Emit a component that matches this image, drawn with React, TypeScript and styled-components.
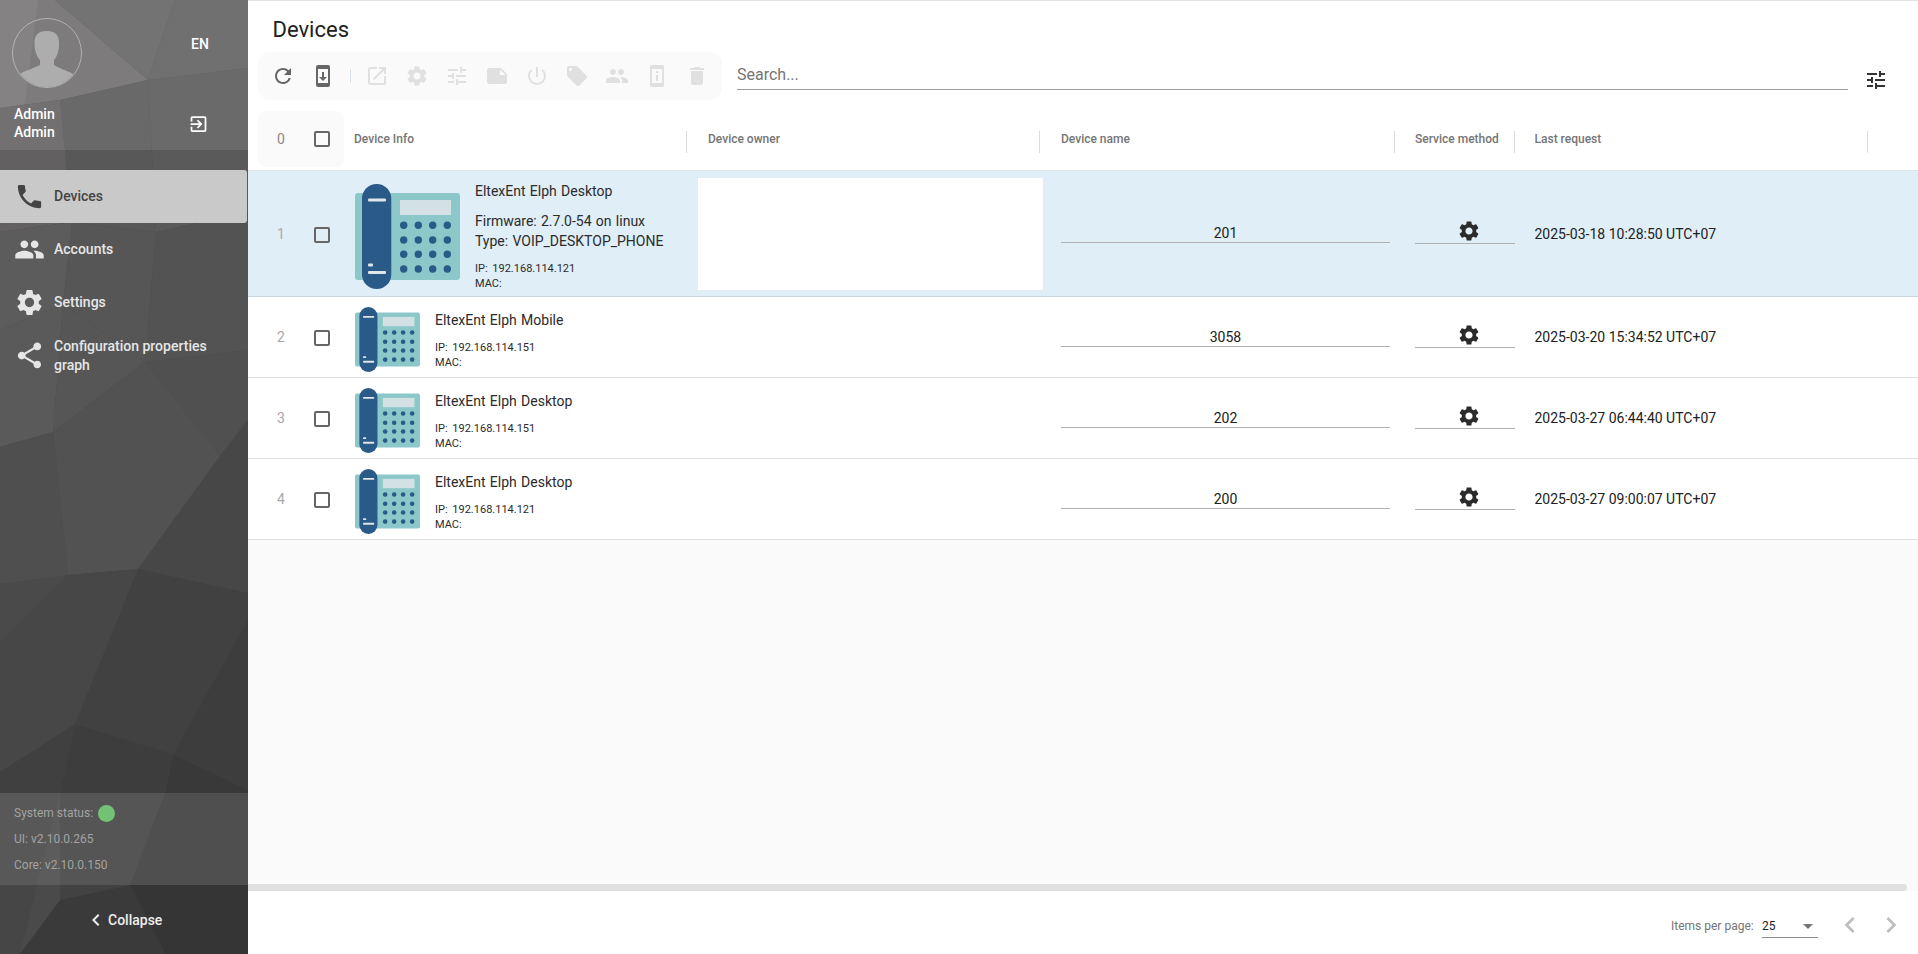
import React from "react";
import styled, { createGlobalStyle } from "styled-components";
import {
  MdChevronLeft,
  MdChevronRight,
  MdDelete,
  MdExitToApp,
  MdLocalOffer,
  MdNote,
  MdOpenInNew,
  MdPeople,
  MdPermDeviceInformation,
  MdPhone,
  MdPowerSettingsNew,
  MdRefresh,
  MdSettings,
  MdShare,
  MdSystemUpdate,
  MdTune,
} from "react-icons/md";

const GlobalStyle = createGlobalStyle`
  html, body {
    margin: 0;
    padding: 0;
    height: 100%;
    background: #fff;
    font-family: Roboto, "Liberation Sans", sans-serif;
    overflow: hidden;
  }
  * {
    box-sizing: border-box;
  }
`;

const Page = styled.div`
  display: flex;
  width: 1918px;
  height: 954px;
`;

const Sidebar = styled.aside`
  position: relative;
  width: 248px;
  flex: none;
  display: flex;
  flex-direction: column;
  background: #4a4a4a;
  overflow: hidden;
`;

const SidebarArt = styled.svg`
  position: absolute;
  top: 0;
  left: 0;
`;

const Profile = styled.div`
  position: relative;
  height: 150px;
  padding: 18px 0 0 12px;
  display: grid;
  grid-template-columns: 179px 18px;
  grid-template-rows: 70px 1fr;
  background: rgba(255, 255, 255, 0.1);
`;

const Avatar = styled.div`
  width: 70px;
  height: 70px;
  border-radius: 50%;
  border: 1px solid rgba(255, 255, 255, 0.4);
  overflow: hidden;
`;

const Lang = styled.div`
  color: #fff;
  font-size: 14px;
  font-weight: 500;
  line-height: 52px;
`;

const UserName = styled.div`
  color: #fff;
  font-size: 14px;
  font-weight: 500;
  line-height: 18px;
  padding: 17px 0 0 2px;
`;

const Logout = styled.div`
  color: #fff;
  display: flex;
  font-size: 24px;
  margin: 24px 0 0 -3px;
`;

const Nav = styled.nav`
  position: relative;
  margin-top: 20px;
  display: flex;
  flex-direction: column;
`;

const NavItem = styled.div<{ $active?: boolean }>`
  height: 53px;
  width: 247px;
  padding-left: 13.5px;
  display: flex;
  align-items: center;
  gap: 9.5px;
  font-size: 14px;
  font-weight: 500;
  line-height: 19px;
  border-radius: 0 3px 3px 0;
  color: ${(p) => (p.$active ? "#444" : "#e6e6e6")};
  background: ${(p) => (p.$active ? "#c9c9c9" : "transparent")};
  svg {
    flex: none;
    font-size: 31px;
  }
`;

const Status = styled.div`
  position: relative;
  margin-top: auto;
  height: 92px;
  padding: 7px 0 0 14px;
  background: rgba(255, 255, 255, 0.1);
  color: #a3a3a3;
  font-size: 12px;
`;

const StatusLine = styled.div`
  height: 26px;
  display: flex;
  align-items: center;
  gap: 5px;
`;

const StatusDot = styled.span`
  width: 17px;
  height: 17px;
  border-radius: 50%;
  background: #73c274;
`;

const Collapse = styled.div`
  position: relative;
  height: 69px;
  padding: 0 0 0 84px;
  display: flex;
  align-items: center;
  color: #eee;
  font-size: 14px;
  font-weight: 500;
  svg {
    font-size: 24px;
  }
`;

const Main = styled.main`
  flex: 1;
  min-width: 0;
  display: flex;
  flex-direction: column;
  border-top: 1px solid #e3e3e3;
`;

const Title = styled.h1`
  margin: 0;
  height: 51px;
  padding-left: 24.5px;
  font-size: 22px;
  font-weight: 400;
  line-height: 58px;
  color: #212121;
`;

const TopBar = styled.div`
  display: flex;
  height: 48px;
  padding-left: 10px;
`;

const Toolbar = styled.div`
  width: 464px;
  flex: none;
  padding-left: 5px;
  display: flex;
  align-items: center;
  background: #fafafa;
  border-radius: 12px;
`;

const ToolButton = styled.span<{ $off?: boolean }>`
  width: 40px;
  height: 40px;
  flex: none;
  display: flex;
  align-items: center;
  justify-content: center;
  font-size: 24px;
  color: ${(p) => (p.$off ? "#e0e0e0" : "#666")};
`;

const ToolSep = styled.span`
  width: 1px;
  height: 14px;
  flex: none;
  margin: 0 6.5px;
  background: #d6e3ec;
`;

const Search = styled.div`
  width: 1111px;
  height: 38px;
  margin-left: 15px;
  border-bottom: 1px solid #9e9e9e;
  font-size: 16px;
  line-height: 46px;
  color: #757575;
`;

const FilterButton = styled.span`
  margin: 16px 0 0 15.5px;
  font-size: 24px;
  display: flex;
  height: 24px;
  color: #333;
`;

const columns = "54px 44px 341px 353px 354.5px 120px 353.5px 1fr";

const HeaderRow = styled.div`
  display: grid;
  grid-template-columns: ${columns};
  height: 63px;
  margin-top: 8px;
  border-bottom: 1px solid #dfe3e6;
  align-items: center;
`;

const CountBox = styled.div`
  grid-column: 1 / 3;
  height: 56px;
  margin: 0 2px 0 10px;
  padding-left: 19px;
  display: flex;
  align-items: center;
  gap: 29.5px;
  background: #fafafa;
  border-radius: 8px;
  color: #8a8a8a;
  font-size: 14px;
`;

const HeaderCell = styled.div`
  height: 22px;
  margin-top: 6px;
  padding-left: 8px;
  font-size: 12px;
  font-weight: 500;
  line-height: 16px;
  color: #757575;
  white-space: nowrap;
  border-right: 1px solid #dcdcdc;
`;

const NameHeader = styled(HeaderCell)`
  padding-left: 21px;
`;

const OwnerHeader = styled(HeaderCell)`
  padding-left: 21px;
`;

const MethodHeader = styled(HeaderCell)`
  padding-left: 20.5px;
`;

const RequestHeader = styled(HeaderCell)`
  padding-left: 20px;
`;

const Check = styled.span`
  display: block;
  width: 16px;
  height: 16px;
  border: 2px solid #666;
  border-radius: 2px;
`;

const Rows = styled.div`
  flex: 1;
  background: #fafafa;
`;

const Row = styled.div<{ $selected?: boolean }>`
  display: grid;
  grid-template-columns: ${columns};
  align-items: center;
  height: ${(p) => (p.$selected ? "126px" : "81px")};
  background: ${(p) => (p.$selected ? "#e0eef7" : "#fff")};
  border-bottom: 1px solid ${(p) => (p.$selected ? "#c8d6e2" : "#e0e0e0")};
`;

const Index = styled.div`
  padding-left: 12px;
  text-align: center;
  font-size: 14px;
  color: #a8a8a8;
`;

const CheckCell = styled.div`
  padding-left: 12px;
  margin-top: 2px;
`;

const Info = styled.div`
  display: flex;
  align-items: center;
  gap: 15px;
  padding: 5px 0 0 9px;
`;

const InfoText = styled.div`
  color: #2b2b2b;
  font-size: 14px;
  line-height: 20px;
  word-spacing: 0.8px;
  white-space: nowrap;
`;

const Block = styled.div`
  margin-top: 10px;
`;

const Small = styled.div`
  font-size: 11px;
  line-height: 15px;
  word-spacing: 2px;
`;

const OwnerCell = styled.div`
  min-width: 0;
`;

const OwnerBox = styled.div`
  width: 345px;
  height: 112px;
  margin-left: 11px;
  background: #fff;
`;

const NameCell = styled.div`
  padding: 0 4.5px 0 21px;
`;

const NameField = styled.div`
  height: 17px;
  margin-top: 1px;
  box-sizing: content-box;
  border-bottom: 1px solid #b0b0b0;
  text-align: center;
  font-size: 14px;
  line-height: 17px;
  color: #212121;
`;

const MethodCell = styled.div`
  padding-left: 20.5px;
`;

const MethodField = styled.div`
  height: 25px;
  margin-bottom: 4px;
  padding-left: 42px;
  border-bottom: 1px solid #b0b0b0;
  font-size: 24px;
  color: #2b2b2b;
  svg {
    display: block;
  }
`;

const RequestCell = styled.div`
  padding-left: 20px;
  font-size: 14px;
  color: #212121;
  white-space: nowrap;
`;

const ScrollBar = styled.div`
  height: 7px;
  background: #fafafa;
  flex: none;
`;

const ScrollThumb = styled.div`
  width: 1659px;
  height: 7px;
  background: #e0e0e0;
  border-radius: 0 4px 4px 0;
`;

const Paginator = styled.footer`
  height: 63px;
  flex: none;
  padding-left: 1423px;
  display: flex;
  align-items: flex-start;
  font-size: 12px;
  color: #757575;
`;

const PerPage = styled.span`
  width: 91px;
  line-height: 70px;
`;

const Select = styled.div`
  position: relative;
  width: 56px;
  height: 47px;
  border-bottom: 1px solid #8f8f8f;
  font-size: 12px;
  line-height: 70px;
  color: #212121;
`;

const Caret = styled.span`
  position: absolute;
  right: 5px;
  top: 33px;
  border-left: 5px solid transparent;
  border-right: 5px solid transparent;
  border-top: 5px solid #757575;
`;

const PageArrow = styled.span<{ $first?: boolean }>`
  margin: 18px 0 0 ${(p) => (p.$first ? "16px" : "9px")};
  font-size: 32px;
  display: flex;
  color: #bdbdbd;
`;

type Poly = [string, string];

const polys: Poly[] = [
  ["0,0 55,0 148,80 60,100 0,108", "#6f6d6d"],
  ["0,0 38,0 25,104 0,108", "#767474"],
  ["55,0 175,0 148,80", "#646464"],
  ["175,0 248,0 248,68 148,80", "#606060"],
  ["148,80 248,68 248,212 156,232", "#5a5a5a"],
  ["60,100 148,80 156,232 72,222", "#585858"],
  ["0,108 60,100 72,222 0,232", "#626060"],
  ["0,232 72,222 63,304 0,330", "#5c5c5c"],
  ["72,222 156,232 145,362 63,304", "#565656"],
  ["156,232 248,212 248,350 145,362", "#535353"],
  ["0,330 63,304 53,432 0,447", "#5a5a5a"],
  ["63,304 145,362 53,432", "#565656"],
  ["145,362 248,350 248,420 220,456", "#505050"],
  ["145,362 220,456 138,569 68,575 53,432", "#525252"],
  ["0,447 53,432 68,575 0,584", "#4f4f4f"],
  ["220,456 248,420 248,593 138,569", "#474747"],
  ["0,584 68,575 0,642", "#4a4a4a"],
  ["0,642 68,575 138,569 75,724 0,772", "#474747"],
  ["138,569 248,593 248,620 173,754 75,724", "#414141"],
  ["248,620 248,790 173,754", "#3d3d3d"],
  ["0,772 75,724 60,793 0,793", "#404040"],
  ["75,724 173,754 165,793 60,793", "#3d3d3d"],
  ["173,754 248,790 248,793 165,793", "#393939"],
  ["0,793 60,793 20,954 0,954", "#464646"],
  ["60,793 165,793 130,885 60,900", "#424242"],
  ["165,793 248,793 248,885 130,885", "#3b3b3b"],
  ["20,954 60,900 130,885 165,954", "#3a3a3a"],
  ["130,885 248,885 248,954 165,954", "#353535"],
];

const Art = () => (
  <SidebarArt width="248" height="954" viewBox="0 0 248 954">
    {polys.map(([points, fill]) => (
      <polygon key={points} points={points} fill={fill} />
    ))}
  </SidebarArt>
);

const Person = () => (
  <svg width="68" height="68" viewBox="0 0 68 68">
    <path
      fill="#adadad"
      d="M21.5 25C21 16 25 12 34 12c9 0 12.500 5 12 13 0 7-2 13-5 16v5c4 3 12 5 19 9v13H7V55c6-4 15-6 20-9v-5c-3-3-5.500-9-5.500-16z"
    />
  </svg>
);

const Phone = ({ size }: { size: number }) => {
  const xs = [48.7, 63.3, 77.7, 92.3];
  const ys = [41.3, 56, 70.3, 85];
  return (
    <svg width={size} height={size} viewBox="0 0 105 105" style={{ flex: "none" }}>
      <rect x="0" y="9" width="105" height="87" rx="3" fill="#8cc8c9" />
      <rect x="7" y="0" width="29.3" height="105" rx="14.6" fill="#2a5a87" />
      <rect x="45" y="16" width="51" height="15" fill="#d4e1e4" />
      <rect x="13" y="14.500" width="18" height="3" rx="1" fill="#e2e6e8" />
      <rect x="13" y="87" width="18" height="3" rx="1" fill="#e2e6e8" />
      <rect x="13" y="79.500" width="5" height="3" rx="1" fill="#e2e6e8" />
      {ys.map((y) =>
        xs.map((x) => <circle key={`${x}-${y}`} cx={x} cy={y} r="3.700" fill="#2a5a87" />)
      )}
    </svg>
  );
};

interface IDevice {
  index: number;
  model: string;
  firmware?: string;
  type?: string;
  ip: string;
  name: string;
  last: string;
}

const devices: IDevice[] = [
  {
    index: 1,
    model: "EltexEnt Elph Desktop",
    firmware: "Firmware: 2.7.0-54 on linux",
    type: "Type: VOIP_DESKTOP_PHONE",
    ip: "192.168.114.121",
    name: "201",
    last: "2025-03-18 10:28:50 UTC+07",
  },
  { index: 2, model: "EltexEnt Elph Mobile", ip: "192.168.114.151", name: "3058", last: "2025-03-20 15:34:52 UTC+07" },
  { index: 3, model: "EltexEnt Elph Desktop", ip: "192.168.114.151", name: "202", last: "2025-03-27 06:44:40 UTC+07" },
  { index: 4, model: "EltexEnt Elph Desktop", ip: "192.168.114.121", name: "200", last: "2025-03-27 09:00:07 UTC+07" },
];

const disabledTools = [
  MdOpenInNew,
  MdSettings,
  MdTune,
  MdNote,
  MdPowerSettingsNew,
  MdLocalOffer,
  MdPeople,
  MdPermDeviceInformation,
  MdDelete,
];

const App = () => {
  return (
    <Page>
      <GlobalStyle />
      <Sidebar>
        <Art />
        <Profile>
          <Avatar>
            <Person />
          </Avatar>
          <Lang>EN</Lang>
          <UserName>
            Admin
            <br />
            Admin
          </UserName>
          <Logout>
            <MdExitToApp />
          </Logout>
        </Profile>
        <Nav>
          <NavItem $active>
            <MdPhone />
            Devices
          </NavItem>
          <NavItem>
            <MdPeople />
            Accounts
          </NavItem>
          <NavItem>
            <MdSettings />
            Settings
          </NavItem>
          <NavItem>
            <MdShare />
            <span>
              Configuration properties
              <br />
              graph
            </span>
          </NavItem>
        </Nav>
        <Status>
          <StatusLine>
            System status: <StatusDot />
          </StatusLine>
          <StatusLine>UI: v2.10.0.265</StatusLine>
          <StatusLine>Core: v2.10.0.150</StatusLine>
        </Status>
        <Collapse>
          <MdChevronLeft />
          Collapse
        </Collapse>
      </Sidebar>
      <Main>
        <Title>Devices</Title>
        <TopBar>
          <Toolbar>
            <ToolButton>
              <MdRefresh />
            </ToolButton>
            <ToolButton>
              <MdSystemUpdate />
            </ToolButton>
            <ToolSep />
            {disabledTools.map((Icon, i) => (
              <ToolButton key={i} $off>
                <Icon />
              </ToolButton>
            ))}
          </Toolbar>
          <Search>Search...</Search>
          <FilterButton>
            <MdTune />
          </FilterButton>
        </TopBar>
        <HeaderRow>
          <CountBox>
            0
            <Check />
          </CountBox>
          <HeaderCell>Device Info</HeaderCell>
          <OwnerHeader>Device owner</OwnerHeader>
          <NameHeader>Device name</NameHeader>
          <MethodHeader>Service method</MethodHeader>
          <RequestHeader>Last request</RequestHeader>
        </HeaderRow>
        <Rows>
          {devices.map((d) => {
            const big = d.firmware !== undefined;
            return (
              <Row key={d.index} $selected={big}>
                <Index>{d.index}</Index>
                <CheckCell>
                  <Check />
                </CheckCell>
                <Info>
                  <Phone size={big ? 105 : 65} />
                  <InfoText>
                    <div>{d.model}</div>
                    {big && (
                      <Block>
                        <div>{d.firmware}</div>
                        <div>{d.type}</div>
                      </Block>
                    )}
                    <Block>
                      <Small>IP: {d.ip}</Small>
                      <Small>MAC:</Small>
                    </Block>
                  </InfoText>
                </Info>
                <OwnerCell>{big && <OwnerBox />}</OwnerCell>
                <NameCell>
                  <NameField>{d.name}</NameField>
                </NameCell>
                <MethodCell>
                  <MethodField>
                    <MdSettings />
                  </MethodField>
                </MethodCell>
                <RequestCell>{d.last}</RequestCell>
              </Row>
            );
          })}
        </Rows>
        <ScrollBar>
          <ScrollThumb />
        </ScrollBar>
        <Paginator>
          <PerPage>Items per page:</PerPage>
          <Select>
            25
            <Caret />
          </Select>
          <PageArrow $first>
            <MdChevronLeft />
          </PageArrow>
          <PageArrow>
            <MdChevronRight />
          </PageArrow>
        </Paginator>
      </Main>
    </Page>
  );
};

export default App;
